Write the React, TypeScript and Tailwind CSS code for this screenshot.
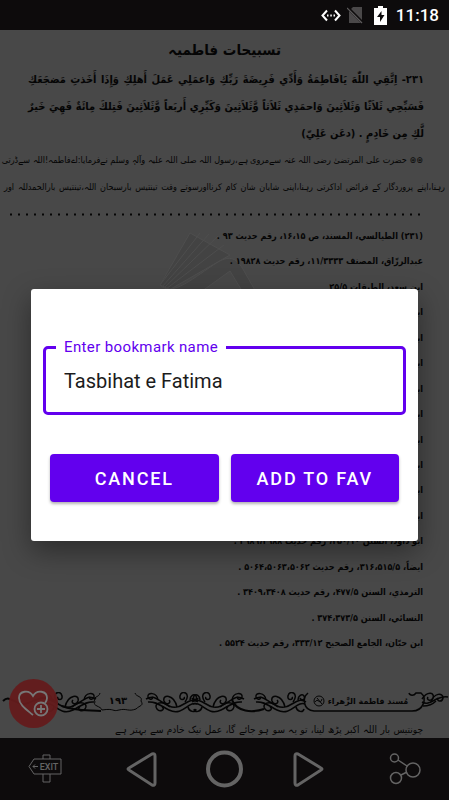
import { useState } from 'react';

const references = [
  "(۲۳۱) الطیالسي، المسند، ص ۱۶،۱۵، رقم حدیث ۹۳ .",
  "عبدالرزّاق، المصنف ۱۱/۳۳۳۳، رقم حدیث ۱۹۸۲۸ .",
  "ابن سعد، الطبقات ۲۵/۵",
  "ابن",
  "ابن",
  "ابن",
  "ابن",
  "ابن",
  "ابن",
  "ابن",
  "ابن",
  "ابن",
  "ابو داود، السنن ۲۵۰/۱۰، رقم حدیث ۲۹۸۹،۲۹۸۸ .",
  "ایضاً، ۳۱۶،۵۱۵/۵، رقم حدیث ۵۰۶۴،۵۰۶۳،۵۰۶۲ .",
  "الترمذي، السنن ۴۷۷/۵، رقم حدیث ۳۴۰۹،۳۴۰۸ .",
  "النسائي، السنن ۳۷۴،۳۷۳/۵ .",
  "ابن حبّان، الجامع الصحیح ۳۳۳/۱۲، رقم حدیث ۵۵۲۴ .",
];

const StatusBar = () => (
  <header className="flex h-[30px] items-center justify-end bg-[#0d0b0c] pr-[10px] text-white">
    <svg className="mr-[6px] h-[13px] w-5" viewBox="0 0 20 13" fill="none" stroke="currentColor" strokeWidth="2">
      <path d="M6 1.5 1.5 6.5 6 11.5M14 1.5l4.500 5-4.500 5" />
      <path d="M6 6.500h1.500M9.300 6.500h1.500M12.500 6.500H14" />
    </svg>
    <svg className="mr-[11px] h-[18px] w-4" viewBox="0 0 16 18">
      <path d="M6 1h9v16H2V5z" fill="#4a4849" />
      <path d="M0 1l16 16" stroke="#0d0b0c" strokeWidth="3" />
      <path d="M0 2l15 15" stroke="#5c5a5b" strokeWidth="1.200" />
    </svg>
    <svg className="mr-[9px] h-[19px] w-[13px]" viewBox="0 0 13 19">
      <path d="M4 0h5v2h4v17H0V2h4z" fill="currentColor" />
      <path d="M7.500 5 3 11h3v5l4.500-7h-3z" fill="#0d0b0c" />
    </svg>
    <span className="font-['Roboto',sans-serif] text-[17px] font-medium leading-6">11:18</span>
  </header>
);

const Scroll = ({ x, flip = false }: { x: number; flip?: boolean }) => (
  <g transform={flip ? `translate(${x} 0) scale(-1 1)` : `translate(${x} 0)`} strokeWidth="1.500">
    <path d="M0 10C10 3 16 20 29 14S43 2 52 7" />
    <path d="M1 12c8-4 14 13 28 6 8-4 13-9 21-8" />
    <path d="M13 10c-7-9 4-13 5-6 1 5-6 4-4 1M21 15c3-13 15-13 13-6-2 5-8 2-5-1" />
    <path d="M28 15c9-8 17-3 13 2-3 4-9 0-5-2M8 8c0-4-4-7-6-4-2 4 3 5 4 2" />
    <path d="M40 8c1-8 11-8 10-3-1 4-6 2-4 0M10 15c-1 5-7 6-8 2" />
  </g>
);

const PageBand = () => (
  <svg className="h-auto w-full" viewBox="0 0 449 22" fill="none" stroke="#050505">
    <path d="M3 9c8-8 13 7 25 2s20-9 30 1" strokeWidth="2" />
    <Scroll x={44} />
    <path d="M100 1c-1 5-8 3-5 9-3 4 6 4 7 8 13-2 10 2 17 0 8-2 9 2 17-1 4-4 8-3 5-8 2-5-5-4-6-8" />
    <path d="M62 14c12 5 25 4 39 5" strokeWidth="2" />
    <Scroll x={198} flip />
    <Scroll x={192} />
    <path d="M232 8c5 12 20 13 32 9" strokeWidth="2" />
    <Scroll x={306} flip />
    <path d="M308 1c-6 5-5 17 6 18h98c12 0 15-13 9-18h-5c-2 3-6 3-7 0" strokeWidth="1.500" />
    <g strokeWidth="1.500">
      <path d="M422 7c6-9 13-6 11-1-2 4-7 2-5-1M422 10c8 5 14-7 26-5" />
      <path d="M431 10c3-9 12-10 12-4-1 5-7 3-5 0M423 14c7 0 10-2 13-5" />
    </g>
    <g fill="#050505" stroke="none" textAnchor="middle" className="font-['DejaVu_Sans',sans-serif] font-bold">
      <text x="118" y="12" fontSize="10">۱۹۳</text>
      <text x="368" y="12" fontSize="8">مُسند فاطمة الزَّهراء</text>
    </g>
    <circle cx="319" cy="9" r="5" />
    <path d="M315 10c3-5 5 4 7-3M317 6l5 6" />
  </svg>
);

const Watermark = () => (
  <svg className="absolute left-[157px] top-[200px] -z-10 h-[70px] w-[105px]" viewBox="0 0 105 70" fill="#434343" stroke="#4e4e4e">
    <path d="M3 55 33 3l40 22-61 35z" />
    <path d="M3 55 43 3M5 57 52 4M7 58 61 6M9 59l58-44" />
    <path d="M3 55c12 13 34-8 58-23 12-7 19-4 26 9l16 28H90L73 41 34 69z" />
  </svg>
);

const NavBar = () => (
  <nav className="flex h-[62px] items-center justify-between bg-[#0d0b0c] px-7 text-[#646464]">
    <button aria-label="Exit" className="w-12">
      <svg className="h-[30px] w-[34px]" viewBox="0 0 34 30" fill="none" stroke="currentColor">
        <path d="M6 5h27v15H6L1 12.500zM15 5V1h7v4M15 20v8h7v-8" />
        <path d="M5 12.500h5M7 10.500l-2 2 2 2" />
        <text x="21" y="16" textAnchor="middle" fontSize="9" fill="currentColor" stroke="none" className="font-['Roboto',sans-serif] font-medium">EXIT</text>
      </svg>
    </button>
    <button aria-label="Back">
      <svg className="h-9 w-[31px]" viewBox="0 0 31 36" fill="none" stroke="currentColor" strokeWidth="3">
        <path d="M26 3 3 17q-2 1 0 2l23 15q3 1 3-2V5q0-3-3-2z" />
      </svg>
    </button>
    <button aria-label="Home">
      <svg className="h-[38px] w-[37px]" viewBox="0 0 37 38" fill="none" stroke="currentColor" strokeWidth="4">
        <circle cx="18.500" cy="19" r="16.500" />
      </svg>
    </button>
    <button aria-label="Forward">
      <svg className="h-9 w-[31px]" viewBox="0 0 31 36" fill="none" stroke="currentColor" strokeWidth="3">
        <path d="m5 3 23 14q2 1 0 2L5 34q-3 1-3-2V5q0-3 3-2z" />
      </svg>
    </button>
    <button aria-label="Share" className="flex w-12 justify-end">
      <svg className="h-8 w-8" viewBox="0 0 32 32" fill="none" stroke="currentColor" strokeWidth="1.500">
        <circle cx="5.500" cy="5" r="4" />
        <circle cx="24" cy="17" r="7" />
        <circle cx="7" cy="25" r="5.500" />
        <path d="m9 7 9 6M12 22l6-3" />
      </svg>
    </button>
  </nav>
);

const BookmarkDialog = () => {
  const [name, setName] = useState("Tasbihat e Fatima");

  return (
    <div className="absolute inset-x-0 bottom-0 top-[30px] flex items-center justify-center px-[31px]">
      <form
        role="dialog"
        onSubmit={(e) => e.preventDefault()}
        className="w-full rounded-[3px] bg-white px-3 pb-[39px] pt-12 font-['Roboto',sans-serif] shadow-[0_10px_28px_rgba(0,0,0,0.4)]"
      >
        <fieldset className="h-[78px] rounded-[5px] border-[3px] border-[#6200ee] px-[10px]">
          <legend className="px-2 text-[15px] leading-5 tracking-wide text-[#6200ee]">
            <label htmlFor="bookmark">Enter bookmark name</label>
          </legend>
          <input
            id="bookmark"
            value={name}
            onChange={(e) => setName(e.target.value)}
            className="h-12 w-full px-2 text-[20px] text-[#1c1c1c] outline-none"
          />
        </fieldset>
        <div className="mt-[39px] flex gap-3 px-[7px]">
          <button type="button" className="h-12 flex-1 rounded bg-[#6200ee] text-[18px] font-medium tracking-widest text-white shadow-[0_2px_3px_rgba(0,0,0,0.3)]">
            CANCEL
          </button>
          <button type="submit" className="h-12 flex-1 rounded bg-[#6200ee] text-[18px] font-medium tracking-widest text-white shadow-[0_2px_3px_rgba(0,0,0,0.3)]">
            ADD TO FAV
          </button>
        </div>
      </form>
    </div>
  );
};

const App = () => {
  return (
    <div className="relative flex min-h-screen flex-col overflow-hidden bg-[#484848] font-['DejaVu_Sans_Condensed','DejaVu_Sans',sans-serif] text-[#050505]">
      <StatusBar />
      {/* Scanned page */}
      <main dir="rtl" className="relative isolate flex flex-1 flex-col">
        <Watermark />
        <h1 className="pt-1 text-center text-[15px] font-bold leading-8">تسبیحات فاطمیہ</h1>
        <div className="whitespace-nowrap pl-7 pr-[25px] text-[11px] font-bold leading-[27px]">
          <p className="[text-align-last:justify]">۲۳۱- اِتَّقِي اللّٰهَ یَافَاطِمَةُ وَأَدِّي فَرِیضَةَ رَبِّكِ وَاعمَلِي عَمَلَ أَهلِكِ وَإِذَا أَخَذتِ مَضجَعَكِ</p>
          <p className="[text-align-last:justify]">فَسَبِّحِي ثَلاَثًا وَثَلاَثِینَ وَاحمَدِي ثَلاَثاً وَّثَلاَثِینَ وَكَبِّرِي أَربَعاً وَّثَلاَثِینَ فَتِلكَ مِائَةٌ فَهِيَ خَیرٌ</p>
          <p>لَّكِ مِن خَادِمٍ . (دعَن عَلِيّ)</p>
        </div>
        <div className="whitespace-nowrap text-[9px] leading-[27px]">
          <p className="pl-[2px] pr-[26px] [text-align-last:justify]">⊛⊛ حضرت علی المرتضیٰ رضی اللہ عنہ سےمروی ہے،رسول اللہ صلی اللہ علیہ وآلہٖ وسلم نےفرمایا:اےفاطمہ!اللہ سےڈرتی</p>
          <p className="px-1 [text-align-last:justify]">رہنا،اپنے پروردگار کے فرائض اداکرتی رہنا،اپنی شایان شان کام کرنااورسوتے وقت تینتیس بارسبحان اللہ،تینتیس بارالحمدللہ اور</p>
        </div>
        <svg className="mt-3 h-[3px] w-full" aria-hidden="true">
          <line x1="10" y1="1.500" x2="94%" y2="1.500" stroke="currentColor" strokeWidth="2" strokeDasharray="2 6" />
        </svg>
        <ol className="flex flex-1 flex-col justify-between pb-9 pr-[26px] pt-2 text-[9px] font-bold leading-[25px]">
          {references.map((line, i) => (
            <li key={i}>{line}</li>
          ))}
        </ol>
        <PageBand />
        <p className="h-6 overflow-hidden whitespace-nowrap pl-[115px] pr-[26px] text-[10px] leading-8 [text-align-last:justify]">
          چونتیس بار اللہ اکبر پڑھ لینا، تو یہ سو ہو جائے گا، عمل نیک خادم سے بہتر ہے
        </p>
        <button aria-label="Add to favourites" className="absolute bottom-[10px] left-[9px] flex size-[49px] items-center justify-center rounded-full bg-[#641b1c]/95 text-[#777]">
          <svg className="h-7 w-[31px]" viewBox="0 0 31 28" fill="none" stroke="currentColor" strokeWidth="1.800">
            <path d="M15 25C9 20 1 15 1 8 1 1 11-1 15 6c4-7 14-5 14 2 0 2-1 4-2 5" />
            <circle cx="23" cy="19" r="6.500" />
            <path d="M23 15v8M19 19h8" />
          </svg>
        </button>
      </main>
      <NavBar />
      <BookmarkDialog />
    </div>
  );
};

export default App;
